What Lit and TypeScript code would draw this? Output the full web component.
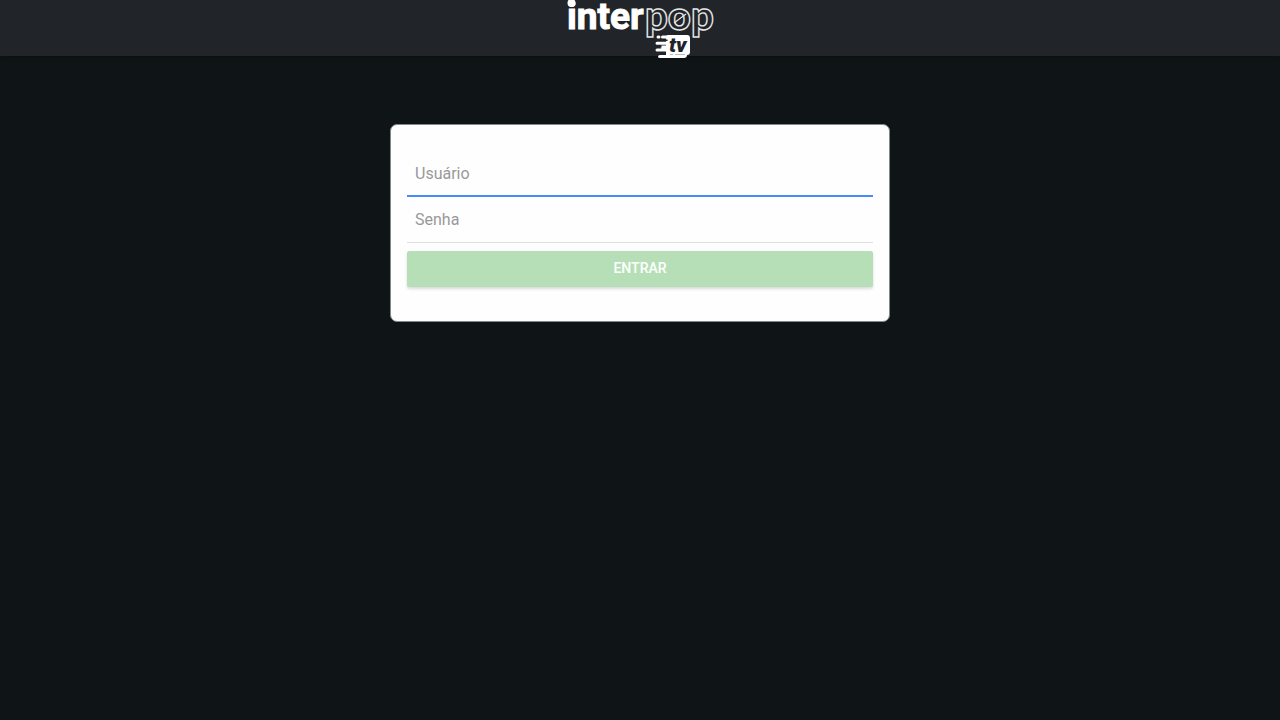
import { LitElement, html, css } from "lit";
import { customElement } from "lit/decorators.js";

@customElement("brand-logo")
class BrandLogo extends LitElement {
  static styles = css`
    :host { display: block; }
    svg { display: block; overflow: visible; }
    text { font-family: Roboto, sans-serif; }
    .solid { font-size: 37px; font-weight: 700; fill: #fff; stroke: #fff; }
    .outline { font-family: Lato, sans-serif; font-size: 40px; font-weight: 900; fill: #212428; stroke: #e4e5e6; stroke-width: 1.4px; }
    .tv { font-size: 21px; font-weight: 900; font-style: italic; fill: #212428; }
  `;
  render() {
    return html`
      <svg width="146" height="58" viewBox="0 0 146 58" role="img" aria-label="interpop tv">
        <text class="solid" x="0" y="29">inter</text>
        <circle cx="4.500" cy="3" r="4" fill="#fff" />
        <text class="outline" x="78" y="30">pop</text>
        <path d="M107 23L119 14" stroke="#e4e5e6" stroke-width="1.200" />
        <path d="M101 35H120Q123 35 123 38V52Q123 55 120 55Q120 58 117 58H93Q91 58 91 56.500Q91 55 93 55H99V38Q99 35 101 35Z" fill="#fff" />
        <path d="M95.500 37H101M91 37H92M90 43.300H101M95 47H101M90 50H101" stroke="#fff" stroke-width="3" stroke-linecap="round" />
        <path d="M96 40.300H100M89 46.700H94" stroke="#212428" stroke-width="1.500" stroke-linecap="round" />
        <text class="tv" x="102" y="52">tv</text>
        <path d="M103 54.500H106M108 54.500H118" stroke="#bbb" stroke-width="1" />
      </svg>
    `;
  }
}

@customElement("app-root")
class AppRoot extends LitElement {
  static styles = css`
    :host {
      display: block;
      min-height: 100vh;
      background: #0f1416;
      font-family: Roboto, sans-serif;
    }
    * { box-sizing: border-box; }
    .bar {
      display: flex;
      justify-content: center;
      align-items: flex-start;
      height: 56px;
      background: #212428;
      box-shadow: 0 2px 4px rgba(0, 0, 0, 0.2);
    }
    .content {
      display: flex;
      justify-content: center;
      padding: 68px 16px 16px;
    }
    .card {
      display: flex;
      flex-direction: column;
      width: 100%;
      max-width: 500px;
      padding: 26px 16px 34px;
      background: #fefefe;
      border: 1px solid #85888a;
      border-radius: 7px;
    }
    .field {
      width: 100%;
      height: 46px;
      padding: 0 8px;
      border: 0;
      border-bottom: 1px solid #dedede;
      border-radius: 0;
      outline: 0;
      background: #fefefe;
      color: #222;
      font: 16px Roboto, sans-serif;
    }
    .field::placeholder { color: #999; opacity: 1; }
    .active { border-bottom: 2px solid #488aff; }
    .submit {
      height: 36px;
      margin-top: 8px;
      padding: 0 16px 2px;
      border: 0;
      border-radius: 2px;
      background: #b6dfb8;
      color: #fff;
      font: 500 14px Roboto, sans-serif;
      text-transform: uppercase;
      box-shadow: 0 2px 3px rgba(0, 0, 0, 0.14);
    }
  `;
  render() {
    return html`
      <header class="bar"><brand-logo></brand-logo></header>
      <main class="content">
        <form class="card" @submit=${(e: Event) => e.preventDefault()}>
          <input class="field active" type="text" placeholder="Usuário" aria-label="Usuário" autocomplete="username" />
          <input class="field" type="password" placeholder="Senha" aria-label="Senha" autocomplete="current-password" />
          <button class="submit" type="submit" disabled>Entrar</button>
        </form>
      </main>
    `;
  }
}
